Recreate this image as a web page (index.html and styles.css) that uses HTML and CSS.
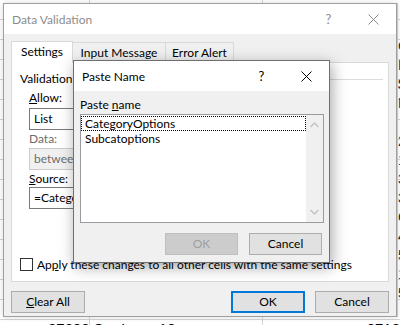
FILE: index.html
```html
<!DOCTYPE html>
<html>
<head>
  <title>Data Validation</title>
  <link rel="stylesheet" href="styles.css">
</head>
<body>
  <div class="sheet">
    <div class="sheet-top">
      <div class="dlg dlg-main">
        <div class="titlebar titlebar-inactive">
          <span class="title">Data Validation</span>
          <span class="caption-btn help">?</span>
          <span class="caption-btn"><svg width="11" height="11" viewBox="0 0 11 11"><path d="M0.5 0.5L10.5 10.5M10.5 0.5L0.5 10.5" stroke="#8c8c8c" stroke-width="1"/></svg></span>
        </div>
        <div class="dlg-body">
          <div class="tabs">
            <div class="tab tab-active">Settings</div>
            <div class="tab tab-input">Input Message</div>
            <div class="tab tab-error">Error Alert</div>
          </div>
          <div class="panel">
            <div class="group-head"><span>Validation criteria</span><span class="rule"></span></div>
            <div class="fld-label label-allow"><u>A</u>llow:</div>
            <div class="box box-allow">List</div>
            <div class="fld-label label-data disabled">Data:</div>
            <div class="box box-data disabled">between</div>
            <div class="fld-label label-source"><u>S</u>ource:</div>
            <div class="box box-source">=CategoryOptions</div>
            <div class="apply">
              <span class="check"></span>
              <span>Ap<u>p</u>ly these changes to all other cells with the same settings</span>
            </div>
          </div>
          <div class="actions">
            <div class="btn btn-clear"><u>C</u>lear All</div>
            <div class="btn btn-primary">OK</div>
            <div class="btn">Cancel</div>
          </div>
        </div>
      </div>
      <!-- cells of the sheet peeking out on the right -->
      <div class="col-right">
        <div>C</div><div>E</div><div>$</div><div>E</div><div></div><div>2</div><div>1</div><div>3</div>
        <div>3</div><div>C</div><div>4</div><div>5</div><div>1</div><div>5</div>
      </div>
    </div>

    <!-- Paste Name dialog sits over the Data Validation one -->
    <div class="dlg dlg-paste">
      <div class="titlebar">
        <span class="title">Paste Name</span>
        <span class="caption-btn help">?</span>
        <span class="caption-btn"><svg width="11" height="11" viewBox="0 0 11 11"><path d="M0.5 0.5L10.5 10.5M10.5 0.5L0.5 10.5" stroke="#000" stroke-width="1"/></svg></span>
      </div>
      <div class="paste-body">
        <div class="paste-label">Paste <u>n</u>ame</div>
        <div class="listbox">
          <div class="list-items">
            <div class="list-item focused">CategoryOptions</div>
            <div class="list-item">Subcatoptions</div>
          </div>
          <div class="scrollbar">
            <svg width="9" height="6" viewBox="0 0 9 6"><path d="M0.5 5L4.5 1L8.5 5" fill="none" stroke="#c2c2c2" stroke-width="1.4"/></svg>
            <svg width="9" height="6" viewBox="0 0 9 6"><path d="M0.5 1L4.5 5L8.5 1" fill="none" stroke="#c2c2c2" stroke-width="1.4"/></svg>
          </div>
        </div>
        <div class="paste-actions">
          <div class="btn btn-disabled">OK</div>
          <div class="btn">Cancel</div>
        </div>
      </div>
    </div>

    <div class="sheet-row">
      <span class="cell-a">27292</span>
      <span class="cell-b">Car Loan 10</span>
      <span class="cell-c">0712</span>
    </div>
  </div>
</body>
</html>
```

FILE: styles.css
```css
body {
  margin: 0;
  font-family: Lato, "Noto Sans", sans-serif;
  font-size: 12px;
  color: #000;
}
.sheet {
  position: relative;
  width: 400px;
  height: 325px;
  overflow: hidden;
  background-color: #fff;
  background-image:
    linear-gradient(to right, transparent 89px, #d4d4d4 89px, #d4d4d4 90px, transparent 90px,
      transparent 262px, #d4d4d4 262px, #d4d4d4 263px, transparent 263px),
    repeating-linear-gradient(to bottom, transparent 0, transparent 19px, #d4d4d4 19px, #d4d4d4 20px);
  padding-top: 3px;
  box-sizing: border-box;
}
.sheet-top {
  display: flex;
}
.col-right {
  margin-left: 0;
  width: 3px;
  padding-top: 33px;
  border-left: 1px solid #c6c6c6;
  font-family: "Liberation Sans", sans-serif;
  font-size: 15px;
  line-height: 19px;
  color: #1a1a2e;
  white-space: nowrap;
}
.col-right div {
  height: 19px;
}

/* dialogs */
.dlg {
  background: #f0f0f0;
  border: 1px solid #9f9f9f;
  box-sizing: border-box;
}
.dlg-main {
  margin-left: 3px;
  width: 394px;
  height: 314px;
  flex-shrink: 0;
  display: flex;
  flex-direction: column;
  box-shadow: 0 0 6px rgba(0, 0, 0, 0.15);
}
.titlebar {
  height: 30px;
  background: #fff;
  display: flex;
  align-items: center;
  flex-shrink: 0;
}
.title {
  flex: 1;
  padding-left: 8px;
}
.titlebar-inactive {
  color: #8c8c8c;
}
.caption-btn {
  width: 45px;
  height: 30px;
  display: flex;
  align-items: center;
  justify-content: center;
}
.help {
  font-size: 13px;
}

.dlg-body {
  padding: 7px 7px 0 7px;
  display: flex;
  flex-direction: column;
}
.tabs {
  display: flex;
  align-items: flex-end;
  height: 21px;
  position: relative;
  z-index: 1;
}
.tab {
  height: 20px;
  box-sizing: border-box;
  border: 1px solid #d9d9d9;
  border-bottom: none;
  text-align: center;
  line-height: 19px;
  background: #f0f0f0;
}
.tab-active {
  width: 62px;
  height: 22px;
  margin-bottom: -1px;
  background: #fff;
  line-height: 20px;
}
.tab-input {
  width: 93px;
  border-left: none;
}
.tab-error {
  width: 68px;
  border-left: none;
}
.panel {
  height: 220px;
  box-sizing: border-box;
  background: #fff;
  border: 1px solid #d9d9d9;
  padding: 0 0 9px 8px;
  display: flex;
  flex-direction: column;
}
.group-head {
  margin-top: 8px;
  height: 16px;
  line-height: 16px;
  display: flex;
  align-items: center;
}
.rule {
  flex: 1;
  height: 1px;
  background: #dcdcdc;
  margin: 0 5px 0 6px;
}
.fld-label {
  height: 14px;
  line-height: 14px;
  margin-left: 9px;
}
.label-allow { margin-top: 4px; }
.label-data { margin-top: 2px; }
.label-source { margin-top: 2px; }
.disabled {
  color: #6d6d6d;
}
.box {
  margin-left: 9px;
  width: 160px;
  height: 22px;
  box-sizing: border-box;
  border: 1px solid #7a7a7a;
  padding-left: 4px;
  line-height: 20px;
  background: #fff;
}
.box-allow { margin-top: 3px; }
.box-data {
  margin-top: 2px;
  border-color: #cccccc;
  background: #f0f0f0;
}
.box-source { margin-top: 1px; }
.apply {
  margin-top: auto;
  display: flex;
  align-items: center;
  gap: 4px;
  height: 15px;
}
.check {
  width: 13px;
  height: 13px;
  box-sizing: border-box;
  border: 1px solid #333;
  background: #fff;
}

.actions {
  display: flex;
  margin-top: 9px;
  gap: 10px;
}
.btn {
  width: 74px;
  height: 22px;
  box-sizing: border-box;
  background: #e1e1e1;
  border: 1px solid #adadad;
  text-align: center;
  line-height: 20px;
}
.btn-clear {
  margin-right: auto;
}
.btn-primary {
  border: 2px solid #0078d7;
  line-height: 18px;
}

/* paste name dialog */
.dlg-paste {
  position: absolute;
  left: 73px;
  top: 60px;
  width: 257px;
  height: 203px;
  border-color: #6f6f6f;
  box-shadow: 2px 4px 14px rgba(0, 0, 0, 0.35);
  z-index: 5;
}
.paste-body {
  padding: 6px 6px 0 6px;
}
.paste-label {
  height: 16px;
  line-height: 16px;
}
.listbox {
  margin-top: 1px;
  width: 244px;
  height: 109px;
  box-sizing: border-box;
  border: 1px solid #9a9aa0;
  background: #fff;
  display: flex;
}
.list-items {
  flex: 1;
  padding-top: 1px;
}
.list-item {
  height: 13px;
  line-height: 13px;
  padding-left: 3px;
  border: 1px solid transparent;
}
.focused {
  border: 1px dotted #000;
}
.scrollbar {
  width: 17px;
  background: #f0f0f0;
  display: flex;
  flex-direction: column;
  justify-content: space-between;
  align-items: center;
  padding: 7px 0 7px 0;
}
.paste-actions {
  display: flex;
  justify-content: flex-end;
  gap: 11px;
  margin-top: 10px;
  padding-right: 1px;
}
.paste-actions .btn {
  width: 73px;
}
.btn-disabled {
  background: #cccccc;
  border-color: #bfbfbf;
  color: #a0a0a0;
}

.sheet-row {
  position: relative;
  height: 20px;
  font-family: "Liberation Sans", sans-serif;
  font-size: 15px;
  line-height: 20px;
  display: flex;
  margin-top: 2px;
}
.cell-a {
  margin-left: 48px;
  width: 46px;
}
.cell-b {
  width: 276px;
}
.cell-c {
  margin-left: 4px;
}
```
